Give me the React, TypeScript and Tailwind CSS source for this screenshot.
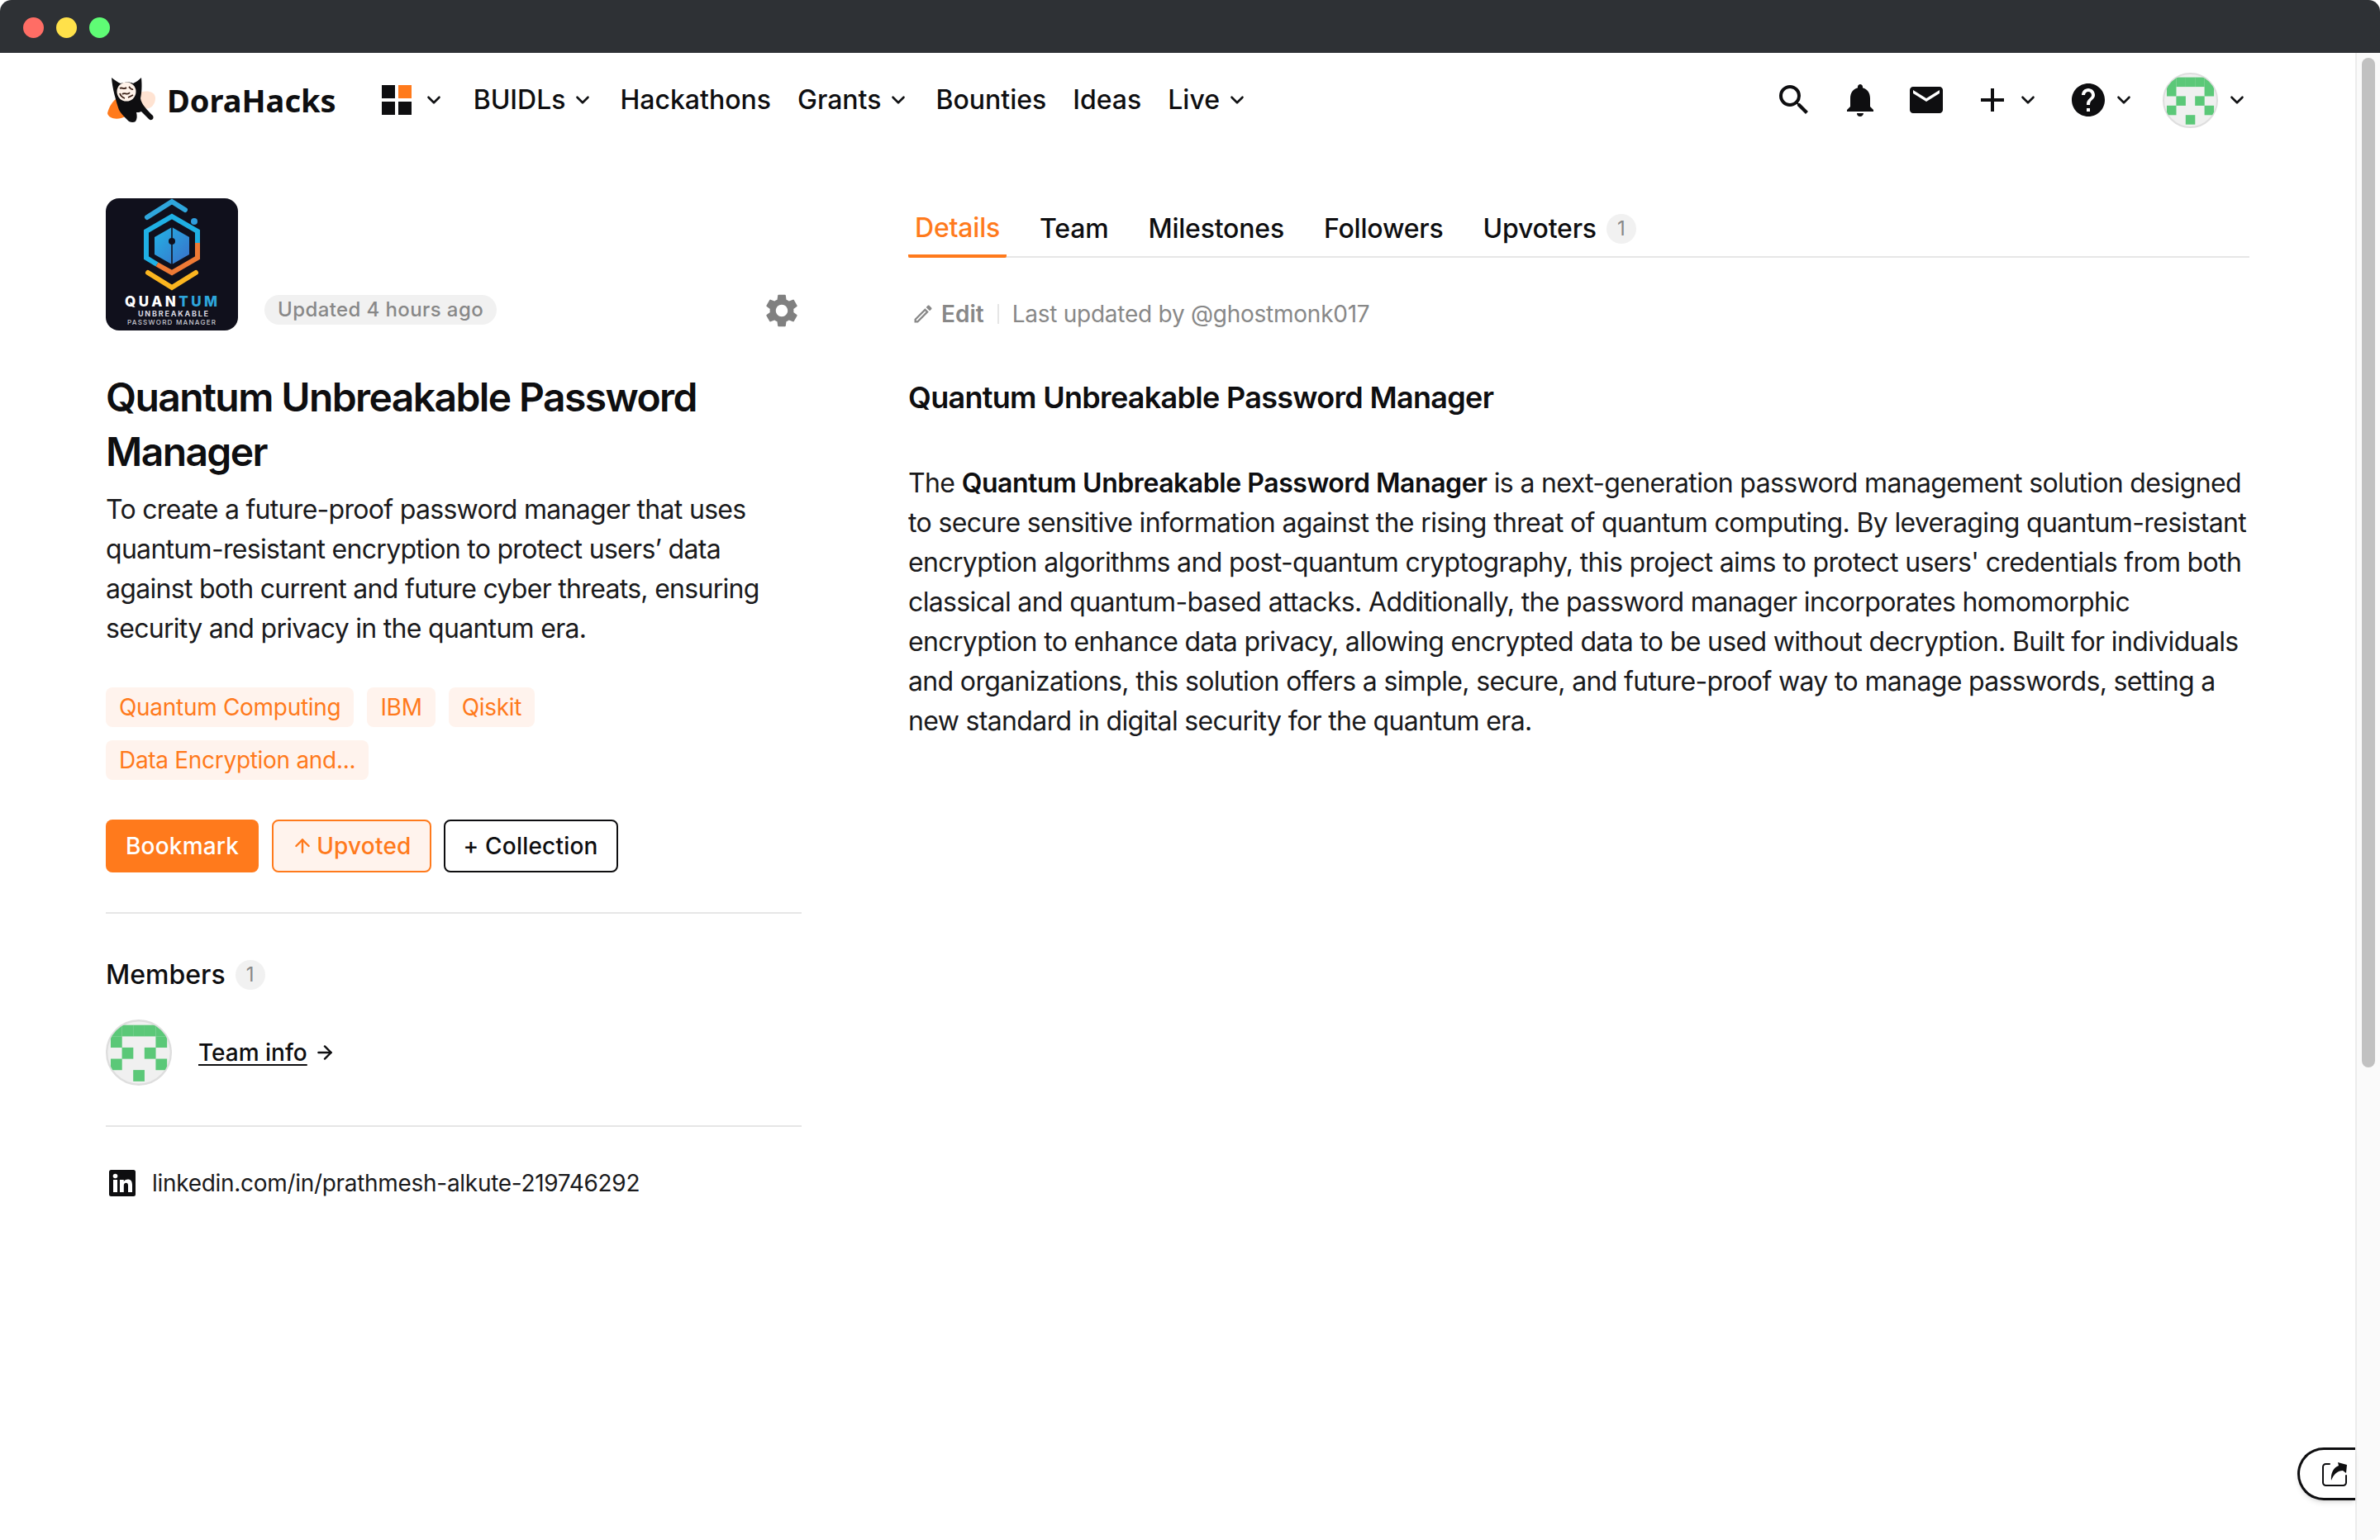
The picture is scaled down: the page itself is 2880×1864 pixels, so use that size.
import React from "react";
import { ChevronDown, ArrowUp, ArrowRight } from "lucide-react";
import { MdSearch, MdNotifications, MdEmail, MdAdd, MdHelp, MdSettings, MdOutlineEdit } from "react-icons/md";

function Chev({ className = "" }: { className?: string }) {
  return <ChevronDown size={26} strokeWidth={2.4} className={"text-[#111214] shrink-0 " + className} />;
}

function Avatar({ size }: { size: number }) {
  const cells = ["11111", "10001", "01010", "10001", "00100"];
  return (
    <svg width={size} height={size} viewBox="0 0 67 67" className="shrink-0">
      <defs>
        <clipPath id={"c" + size}>
          <circle cx="33.5" cy="33.5" r="32" />
        </clipPath>
      </defs>
      <circle cx="33.5" cy="33.5" r="32.5" fill="#f0f0f0" stroke="#dedede" strokeWidth="2" />
      <g clipPath={`url(#c${size})`}>
        {cells.map((row, y) =>
          row.split("").map((c, x) =>
            c === "1" ? (
              <rect key={x + "-" + y} x={5 + x * 11.4} y={5.6 + y * 11.4} width="11.5" height="11.5" fill="#5bc878" />
            ) : null
          )
        )}
      </g>
    </svg>
  );
}

function CatLogo() {
  return (
    <svg width="62" height="60" viewBox="0 0 62 60" className="shrink-0">
      <path d="M2 46 C4 38 9 30 14 28 L24 50 C16 54 4 54 2 46Z" fill="#ff7a1c" />
      <path d="M38 22 C46 18 60 18 60 28 C60 38 50 44 44 38Z" fill="#ffe3d2" />
      <path d="M7 3 C11 6 15 9 18 10 C24 8 30 8 33 10 C37 8 40 6 43 3 C44 12 43.5 22 42 28 C43 35 50 42 57 49 C59 53 55 56 52 53 C49 50 46 47 43 44 C41 45 39 45 37 45 C38 49 38 53 36 56 C33 58 28 57 26 54 C22 50 18 46 16 42 C12 30 8 16 7 3Z" fill="#0e0e10" />
      <circle cx="25" cy="20" r="11.5" fill="#fff3ea" />
      <path d="M17 16 C20 14 22 18 25 15 M20 23 C23 20 26 25 29 21 M28 14 C30 16 31 18 33 17 M17 22 C18 25 20 27 23 28 M27 27 C29 26 31 25 33 24" stroke="#3a2016" strokeWidth="1.8" fill="none" />
    </svg>
  );
}

function GridIcon() {
  return (
    <div className="grid grid-cols-[16px_16px] grid-rows-[16px_16px] gap-1 shrink-0">
      <span className="bg-[#0e0e10]" />
      <span className="bg-[#ff7a1c]" />
      <span className="bg-[#0e0e10]" />
      <span className="bg-[#0e0e10]" />
    </div>
  );
}

function ProjectLogo() {
  return (
    <svg width="160" height="160" viewBox="0 0 160 160" className="shrink-0 rounded-[16px] bg-[#10101c]">
      <defs>
        <linearGradient id="hexFill" x1="0" y1="0" x2="1" y2="1">
          <stop offset="0" stopColor="#22b4e6" />
          <stop offset="1" stopColor="#3a6fc8" />
        </linearGradient>
      </defs>
      <path d="M50 23 L80 4 L96 14" fill="none" stroke="#2fa6dc" strokeWidth="6" strokeLinecap="round" />
      <path d="M62 80 L49 72 L49 40 L80 22 L111 40 L111 56" fill="none" stroke="#1fb0e4" strokeWidth="6" />
      <path d="M111 54 L111 72 L80 90 L62 80" fill="none" stroke="#ef7a35" strokeWidth="6" />
      <path d="M80 35 L101 47 L101 68 L80 80 L59 68 L59 47Z" fill="url(#hexFill)" />
      <path d="M80 35 L80 80" stroke="#10101c" strokeWidth="1.6" />
      <circle cx="80" cy="52" r="4" fill="#10101c" />
      <circle cx="107" cy="28" r="4" fill="#2f9ddc" />
      <path d="M51 90 L80 108 L109 90" fill="none" stroke="#fbb51f" strokeWidth="6" strokeLinecap="round" />
      <text x="23" y="131" fontFamily="Inter, sans-serif" fontWeight="800" fontSize="17" fill="#fff" textLength="112" lengthAdjust="spacing">
        QUAN<tspan fill="#2ea6dc">TUM</tspan>
      </text>
      <text x="39" y="143" fontFamily="Inter, sans-serif" fontWeight="700" fontSize="9" fill="#d8d8e0" textLength="85" lengthAdjust="spacing">UNBREAKABLE</text>
      <text x="26" y="153" fontFamily="Inter, sans-serif" fontWeight="500" fontSize="8" fill="#c8c8d0" textLength="107" lengthAdjust="spacing">PASSWORD MANAGER</text>
    </svg>
  );
}

function Badge({ children }: { children: React.ReactNode }) {
  return (
    <span className="flex items-center justify-center w-9 h-9 rounded-full bg-[#f1f1f1] text-[24px] text-[#888] font-normal">
      {children}
    </span>
  );
}

function Tag({ children }: { children: React.ReactNode }) {
  return <span className="h-12 flex items-center px-4 rounded-lg bg-[#fff3ed] text-[#ff7a1c] text-[28px] tracking-[-0.3px]">{children}</span>;
}

function NavItem({ label, chev }: { label: string; chev?: boolean }) {
  return (
    <div className="flex items-center gap-2">
      <span>{label}</span>
      {chev && <Chev />}
    </div>
  );
}

function Nav() {
  return (
    <div className="h-[114px] pl-[128px] pr-[130px] flex items-center justify-between">
      <div className="flex items-center">
        <CatLogo />
        <span className="ml-3 text-[38px] font-bold text-[#0e0e10] [font-family:'Noto_Sans',sans-serif]">DoraHacks</span>
        <div className="ml-[55px] flex items-center gap-[35px]">
          <div className="flex items-center gap-[14px]">
            <GridIcon />
            <Chev />
          </div>
          <div className="flex items-center gap-8 text-[32px] font-medium text-[#0e0e10]">
            <NavItem label="BUIDLs" chev />
            <NavItem label="Hackathons" />
            <NavItem label="Grants" chev />
            <NavItem label="Bounties" />
            <NavItem label="Ideas" />
            <NavItem label="Live" chev />
          </div>
        </div>
      </div>
      <div className="flex items-center text-[#0e0e10]">
        <MdSearch size={48} />
        <MdNotifications size={48} className="ml-8" />
        <MdEmail size={48} className="ml-8" />
        <MdAdd size={48} className="ml-8" />
        <Chev className="ml-[6px]" />
        <MdHelp size={48} className="ml-[36px]" />
        <Chev className="ml-[6px]" />
        <div className="ml-[34px]"><Avatar size={67} /></div>
        <Chev className="ml-[10px]" />
      </div>
    </div>
  );
}

function LeftColumn() {
  return (
    <div className="w-[842px] shrink-0 flex flex-col">
      <div className="flex items-end h-[160px]">
        <ProjectLogo />
        <span className="ml-8 mb-[8px] h-9 px-4 flex items-center rounded-full bg-[#f1f1f1] text-[#888] text-[24px] font-medium tracking-[0.4px] translate-y-[1px]">Updated 4 hours ago</span>
        <MdSettings size={48} className="ml-auto text-[#808080]" />
      </div>
      <h1 className="mt-[48px] text-[48px] leading-[66px] font-semibold tracking-[-1.6px] text-[#0e0e10]">Quantum Unbreakable Password Manager</h1>
      <p className="mt-[13px] text-[32px] leading-[48px] tracking-[-0.7px] text-[#1a1a1c]">
        To create a future-proof password manager that uses quantum-resistant encryption to protect users’ data against both current and future cyber threats, ensuring security and privacy in the quantum era.
      </p>
      <div className="mt-[47px] flex flex-wrap gap-4">
        <Tag>Quantum Computing</Tag>
        <Tag>IBM</Tag>
        <Tag>Qiskit</Tag>
        <Tag>Data Encryption and...</Tag>
      </div>
      <div className="mt-[48px] flex gap-4 text-[28px] font-medium tracking-[0.2px]">
        <button className="h-16 px-6 rounded-lg bg-[#ff7a1c] text-white">Bookmark</button>
        <button className="h-16 px-[22px] rounded-lg bg-[#fff3ed] border-2 border-[#ff7a1c] text-[#ff7a1c] flex items-center gap-[4px]">
          <ArrowUp size={26} strokeWidth={2.2} />Upvoted
        </button>
        <button className="h-16 px-[22px] -ml-[1px] rounded-lg bg-white border-2 border-[#0e0e10] text-[#0e0e10]">+ Collection</button>
      </div>
      <div className="mt-[48px] h-[2px] bg-[#e6e6e6]" />
      <div className="mt-[56px] flex items-center gap-3 h-9">
        <span className="text-[32px] font-medium text-[#0e0e10]">Members</span>
        <Badge>1</Badge>
      </div>
      <div className="mt-[36px] flex items-center gap-8">
        <Avatar size={80} />
        <span className="flex items-center gap-2 text-[28px] font-medium text-[#0e0e10]">
          <span className="underline underline-offset-4">Team info</span>
          <ArrowRight size={26} strokeWidth={2.2} />
        </span>
      </div>
      <div className="mt-[48px] h-[2px] bg-[#e6e6e6]" />
      <div className="mt-[47px] flex items-center pl-1 gap-5 text-[28px] tracking-[-0.3px] text-[#1a1a1c]">
        <svg width="32" height="32" viewBox="0 0 32 32" className="shrink-0">
          <rect width="32" height="32" rx="2.5" fill="#0e0e10" />
          <rect x="5" y="12" width="5" height="15" fill="#fff" />
          <circle cx="7.5" cy="7.5" r="2.8" fill="#fff" />
          <path d="M13 12h4.8v2.2c.9-1.5 2.6-2.6 4.8-2.6 4 0 5.4 2.6 5.4 6.6V27h-5v-7.8c0-2-.5-3.4-2.4-3.4-2 0-2.8 1.5-2.8 3.4V27H13Z" fill="#fff" />
        </svg>
        linkedin.com/in/prathmesh-alkute-219746292
      </div>
    </div>
  );
}

function RightColumn() {
  const tabs = ["Milestones", "Followers", "Upvoters"];
  return (
    <div className="ml-[129px] w-[1623px] shrink-0 flex flex-col">
      <div className="flex items-center h-[72px] border-b-2 border-[#e6e6e6] text-[32px] font-medium tracking-[-0.2px] text-[#0e0e10]">
        <div className="h-[72px] px-2 flex items-center text-[#ff7a1c] border-b-4 border-[#ff7a1c] rounded-[2px] -mb-[2px] pt-[4px]">Details</div>
        <span className="ml-[40px] pt-[4px]">Team</span>
        {tabs.map((t) => (
          <span key={t} className="ml-[48px] pt-[4px]">{t}</span>
        ))}
        <span className="ml-3 pt-[4px]"><Badge>1</Badge></span>
      </div>
      <div className="mt-[50px] h-9 flex items-center pl-1 text-[28px] text-[#888]">
        <MdOutlineEdit size={28} className="text-[#888]" />
        <span className="ml-2 font-semibold">Edit</span>
        <span className="ml-4 w-[2px] h-6 bg-[#e6e6e6]" />
        <span className="ml-4 tracking-[-0.25px]">Last updated by @ghostmonk017</span>
      </div>
      <h2 className="mt-[56px] text-[36px] leading-[54px] font-semibold tracking-[-0.7px] text-[#0e0e10]">Quantum Unbreakable Password Manager</h2>
      <p className="mt-[53px] text-[32px] leading-[48px] tracking-[-0.65px] text-[#1a1a1c]">
        The <b className="font-semibold tracking-[-0.45px] text-[#0e0e10]">Quantum Unbreakable Password Manager</b> is a next-generation password management solution designed to secure sensitive information against the rising threat of quantum computing. By leveraging quantum-resistant encryption algorithms and post-quantum cryptography, this project aims to protect users' credentials from both classical and quantum-based attacks. Additionally, the password manager incorporates homomorphic encryption to enhance data privacy, allowing encrypted data to be used without decryption. Built for individuals and organizations, this solution offers a simple, secure, and future-proof way to manage passwords, setting a new standard in digital security for the quantum era.
      </p>
    </div>
  );
}

export default function App() {
  return (
    <div className="relative w-[2880px] h-[1864px] overflow-hidden bg-white flex flex-col [font-family:Inter,sans-serif]">
      <div className="h-16 shrink-0 bg-[#2e3135] rounded-t-[14px] flex items-center gap-[15px] pl-[28px] pt-[2px]">
        <span className="w-[25px] h-[25px] rounded-full bg-[#ff6d65]" />
        <span className="w-[25px] h-[25px] rounded-full bg-[#ffe14a]" />
        <span className="w-[25px] h-[25px] rounded-full bg-[#5ffc75]" />
      </div>
      <div className="flex-1 flex min-h-0">
        <div className="flex-1 flex flex-col min-w-0">
          <Nav />
          <div className="pl-[128px] pt-[62px] flex">
            <LeftColumn />
            <RightColumn />
          </div>
        </div>
        <div className="w-[30px] shrink-0 bg-[#fafafa] border-l-2 border-[#ececec] pl-[6px] pt-[6px] rounded-br-[14px]">
          <div className="w-4 h-[1222px] rounded-full bg-[#c1c1c1]" />
        </div>
      </div>
      <div className="absolute left-[2780px] top-[1752px] w-[70px] h-16 rounded-l-[32px] border-[3px] border-r-0 border-[#0e0e10] bg-white shadow-md flex items-center pl-[26px]">
        <svg width="32" height="32" viewBox="0 0 32 32" fill="none">
          <path d="M10 4H5.5A3.5 3.5 0 0 0 2 7.5v19A3.5 3.5 0 0 0 5.5 30h21a3.5 3.5 0 0 0 3.5-3.5V18" stroke="#0e0e10" strokeWidth="2" strokeLinecap="round" />
          <path d="M12 24C11 15 15 8 21 6L20 2 31 5 30 15 26 12C20 12 15 16 12 24Z" fill="#0e0e10" />
        </svg>
      </div>
    </div>
  );
}
